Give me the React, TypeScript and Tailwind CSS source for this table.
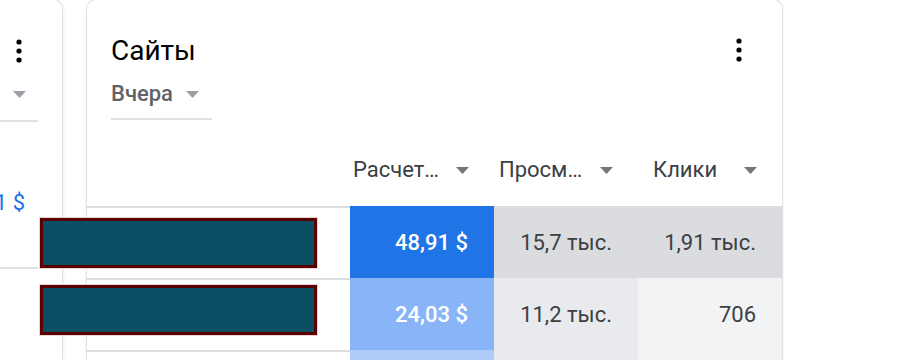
import React from "react";

function Dots() {
  return (
    <svg width="24" height="24" viewBox="0 0 24 24" className="block">
      <circle cx="12" cy="3" r="2.6" fill="#000" />
      <circle cx="12" cy="12" r="2.6" fill="#000" />
      <circle cx="12" cy="21" r="2.6" fill="#000" />
    </svg>
  );
}

function Caret({ color = "#757575" }: { color?: string }) {
  return (
    <svg width="13" height="7" viewBox="0 0 13 7" className="block shrink-0">
      <path d="M0 0h13L6.5 7z" fill={color} />
    </svg>
  );
}

type Cell = { value: string; bg: string; text: string };

const rows: Cell[][] = [
  [
    { value: "48,91 $", bg: "bg-[#1f74e6]", text: "text-white font-medium" },
    { value: "15,7 тыс.", bg: "bg-[#dadce0]", text: "text-[#3c4043]" },
    { value: "1,91 тыс.", bg: "bg-[#dadce0]", text: "text-[#3c4043]" },
  ],
  [
    { value: "24,03 $", bg: "bg-[#8ab4f8]", text: "text-white font-medium" },
    { value: "11,2 тыс.", bg: "bg-[#e8eaed]", text: "text-[#3c4043]" },
    { value: "706", bg: "bg-[#f1f3f4]", text: "text-[#3c4043]" },
  ],
  [
    { value: "", bg: "bg-[#aecbfa]", text: "text-white" },
    { value: "", bg: "bg-[#e8eaed]", text: "text-[#3c4043]" },
    { value: "", bg: "bg-[#f1f3f4]", text: "text-[#3c4043]" },
  ],
];

const redacted = ["top-[10px]", "top-[5px]"];

export default function App() {
  return (
    <div className="w-[916px] h-[360px] overflow-hidden bg-white flex font-['Roboto',sans-serif]">
      {/* left card, cut off */}
      <div className="w-[63px] shrink-0 -mt-px border-t border-r border-[#e3e3e3] rounded-tr-[10px] shadow-[1px_0_2px_rgba(60,64,67,0.08)]">
        <div className="w-[38px] flex flex-col items-center">
          <div className="mt-[39px]">
            <Dots />
          </div>
          <div className="mt-[28px]">
            <Caret color="#9aa0a6" />
          </div>
        </div>
        <div className="w-[38px] mt-[22px] border-b-2 border-[#e0e1e4]" />
        <div className="w-[38px] mt-[67px] flex justify-end pr-[13px]">
          <span className="text-[22px] leading-[28px] text-[#1a73e8] whitespace-nowrap">1 $</span>
        </div>
        <div className="w-[38px] mt-[50px] border-b-2 border-[#e0e1e4]" />
      </div>

      {/* sites card */}
      <div className="ml-[23px] w-[697px] shrink-0 -mt-px border-t border-l border-r border-[#e3e3e3] rounded-t-[10px] shadow-[0_1px_3px_rgba(60,64,67,0.1)]">
        <div className="px-[24px] pt-[33px] flex justify-between items-start">
          <div>
            <div className="text-[28px] leading-[36px] text-[#000]">Сайты</div>
            <div className="mt-[11px] w-[101px] h-[40px] flex items-start border-b-2 border-[#e0e1e4]">
              <span className="text-[22px] leading-[28px] font-medium text-[#5f6368]">Вчера</span>
              <span className="ml-[13px] mt-[11px]">
                <Caret color="#9aa0a6" />
              </span>
            </div>
          </div>
          <div className="mt-[5px] mr-[7px]">
            <Dots />
          </div>
        </div>

        {/* table header */}
        <div className="flex h-[86px] items-end pb-[22px]">
          <div className="w-[263px]" />
          {[
            { label: "Расчет…", pl: "pl-[3px]" },
            { label: "Просм…", pl: "pl-[5px]" },
            { label: "Клики", pl: "pl-[15px]" },
          ].map((h) => (
            <div key={h.label} className={`w-[144px] flex items-center justify-between pr-[25px] ${h.pl}`}>
              <span className="text-[22px] leading-[28px] text-[#3c4043] whitespace-nowrap">{h.label}</span>
              <Caret />
            </div>
          ))}
        </div>

        {/* table rows */}
        {rows.map((row, i) => (
          <div key={i} className="flex h-[72px]">
            <div className="w-[263px] relative border-t-2 border-[#dadce0]">
              {i < 2 && (
                <div
                  className={`absolute left-[-47px] ${redacted[i]} w-[277px] h-[50px] bg-[#0a4f63] border-[3px] border-[#5a0000] shadow-[0_0_0_1px_#ecd2d2]`}
                />
              )}
            </div>
            {row.map((c, j) => (
              <div
                key={j}
                className={`w-[144px] flex items-center justify-end pr-[26px] text-[22px] ${c.bg} ${c.text}`}
              >
                {c.value}
              </div>
            ))}
          </div>
        ))}
      </div>
    </div>
  );
}
